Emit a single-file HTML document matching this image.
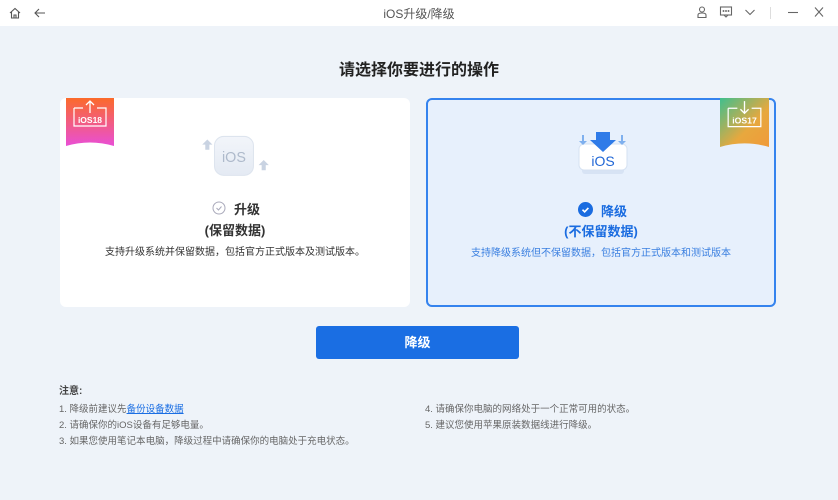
<!DOCTYPE html>
<html><head><meta charset="utf-8"><style>
*{margin:0;padding:0;box-sizing:border-box}
body{width:838px;height:500px;background:#eef3f9;font-family:"Liberation Sans","Noto Sans CJK SC",sans-serif;position:relative;overflow:hidden;color:#333}
.tb{position:absolute;left:0;top:0;width:838px;height:26px;background:#fff}
.tb .t{position:absolute;left:0;width:838px;top:5px;text-align:center;font-size:12px;color:#555}
.abs{position:absolute}
.card{position:absolute;top:98px;width:350px;height:209px;border-radius:6px;background:#fff}
.h{position:absolute;left:0;width:100%;text-align:center}
.note{position:absolute;font-size:9.5px;color:#666;line-height:16px}
</style></head><body>
<div class="tb">
<svg class="abs" style="left:8px;top:6px" width="14" height="14" viewBox="0 0 14 14" fill="none" stroke="#555" stroke-width="1.1"><path d="M2 7L7 2.5 12 7M3.5 6v6h7V6M6 12V9h2v3"/></svg>
<svg class="abs" style="left:33px;top:6px" width="14" height="14" viewBox="0 0 14 14" fill="none" stroke="#555" stroke-width="1.1"><path d="M12 7H2M6 3L2 7l4 4"/></svg>
<div class="t">iOS升级/降级</div>
<svg class="abs" style="left:695px;top:5px" width="14" height="14" viewBox="0 0 14 14" fill="none" stroke="#666" stroke-width="1.1"><circle cx="7" cy="4.5" r="2.5"/><path d="M3 12.5V10q0-2 4-2t4 2v2.5z"/></svg>
<svg class="abs" style="left:719px;top:5px" width="14" height="14" viewBox="0 0 14 14" fill="none" stroke="#666" stroke-width="1.1"><rect x="1.5" y="2" width="11" height="8"/><path d="M5 10l2 2 2-2"/><circle cx="4.5" cy="6" r=".4"/><circle cx="7" cy="6" r=".4"/><circle cx="9.5" cy="6" r=".4"/></svg>
<svg class="abs" style="left:743px;top:5px" width="14" height="14" viewBox="0 0 14 14" fill="none" stroke="#666" stroke-width="1.1"><path d="M2.5 5l4.5 4.5L11.5 5"/></svg>
<div class="abs" style="left:770px;top:7px;width:1px;height:12px;background:#ddd"></div>
<svg class="abs" style="left:786px;top:5px" width="14" height="14" viewBox="0 0 14 14" stroke="#666" stroke-width="1.1"><path d="M2 7.5h10"/></svg>
<svg class="abs" style="left:812px;top:5px" width="14" height="14" viewBox="0 0 14 14" stroke="#666" stroke-width="1.1"><path d="M3 2.5l8 9M11 2.5l-8 9"/></svg>
</div>
<div class="h" style="top:56px;font-size:16px;font-weight:bold;color:#222">请选择你要进行的操作</div>

<div class="card" style="left:60px">
<svg class="abs" style="left:134px;top:30px" width="82" height="64" viewBox="0 0 80 62"><defs><linearGradient id="g1" x1="0" y1="0" x2="0" y2="1"><stop offset="0" stop-color="#f2f5fa"/><stop offset="1" stop-color="#e4eaf3"/></linearGradient></defs>
<path d="M8 16l5-5 5 5h-3v5h-4v-5z" fill="#c9d3e2"/><path d="M63 36l5-5 5 5h-3v5h-4v-5z" fill="#c9d3e2"/>
<rect x="20" y="8" width="38" height="38" rx="9" fill="url(#g1)" stroke="#dde4ee"/>
<text x="39" y="33" text-anchor="middle" font-size="14" fill="#aebacb" font-family="Liberation Sans">iOS</text></svg>
<svg class="abs" style="left:152px;top:103px" width="14" height="14" viewBox="0 0 14 14" fill="none" stroke="#aab" stroke-width="1"><circle cx="7" cy="7" r="6"/><path d="M4.5 7l2 2 3-3.5"/></svg>
<div class="abs" style="left:174px;top:101px;font-size:13px;font-weight:bold;color:#333">升级</div>
<div class="h" style="top:122px;font-size:13px;font-weight:bold;color:#333">(保留数据)</div>
<div class="h" style="top:145px;font-size:10px;color:#333">支持升级系统并保留数据，包括官方正式版本及测试版本。</div>
</div>
<svg class="abs" style="left:66px;top:98px" width="48" height="48" viewBox="0 0 48 48"><defs><linearGradient id="g2" x1="0" y1="0" x2="0" y2="1"><stop offset="0" stop-color="#fb6a2a"/><stop offset="1" stop-color="#e94fd6"/></linearGradient></defs>
<path d="M0 0h48v48q-24-7-48 0z" fill="url(#g2)"/><path d="M8 10h9M31 10h9v18H8V10" fill="none" stroke="#fff" stroke-width="1.2"/><path d="M24 15V3M20 7l4-4 4 4" fill="none" stroke="#fff" stroke-width="1.3"/>
<text x="24" y="25" text-anchor="middle" font-size="8.5" font-weight="bold" fill="#fff" font-family="Liberation Sans">iOS18</text></svg>

<div class="card" style="left:426px;background:#e7f0fc;border:2px solid #3583ee">
<svg class="abs" style="left:140px;top:30px" width="70" height="60" viewBox="0 0 70 60">
<rect x="14" y="34" width="42" height="10" rx="3" fill="#d7e3f4"/>
<rect x="11" y="14" width="48" height="26" rx="5" fill="#fff" stroke="#d6e2f2"/>
<path d="M28 2h14v8h6L35 22 22 10h6z" fill="#2f7be8"/>
<path d="M14 5v6h-3l4 4 4-4h-3V5z" fill="#7fb0ee"/><path d="M53 5v6h-3l4 4 4-4h-3V5z" fill="#7fb0ee"/>
<text x="35" y="36" text-anchor="middle" font-size="14" fill="#1f66d6" font-family="Liberation Sans">iOS</text></svg>
<svg class="abs" style="left:150px;top:102px" width="15" height="15" viewBox="0 0 14 14"><circle cx="7" cy="7" r="7" fill="#1a6ce0"/><path d="M4.2 7.2l2 2 3.5-3.7" fill="none" stroke="#fff" stroke-width="1.5"/></svg>
<div class="abs" style="left:173px;top:101px;font-size:13px;font-weight:bold;color:#1a6ce0">降级</div>
<div class="h" style="top:121px;font-size:13px;font-weight:bold;color:#1a6ce0">(不保留数据)</div>
<div class="h" style="top:144px;font-size:10px;color:#3a7fe0">支持降级系统但不保留数据，包括官方正式版本和测试版本</div>
</div>
<svg class="abs" style="left:720px;top:98px" width="49" height="49" viewBox="0 0 48 48"><defs><linearGradient id="g3" x1="0" y1="0" x2="1" y2="1"><stop offset="0" stop-color="#3fbf8e"/><stop offset=".6" stop-color="#e7a83e"/><stop offset="1" stop-color="#f09a3a"/></linearGradient></defs>
<path d="M0 0h48v48q-24-7-48 0z" fill="url(#g3)"/><path d="M8 10h9M31 10h9v18H8V10" fill="none" stroke="#fff" stroke-width="1.2"/><path d="M24 3v12M20 11l4 4 4-4" fill="none" stroke="#fff" stroke-width="1.3"/>
<text x="24" y="25" text-anchor="middle" font-size="8.5" font-weight="bold" fill="#fff" font-family="Liberation Sans">iOS17</text></svg>

<div class="abs" style="left:316px;top:326px;width:203px;height:33px;background:#1a6ee3;border-radius:3px;color:#fff;font-size:13px;font-weight:bold;text-align:center;line-height:33px">降级</div>

<div class="note" style="left:59px;top:384px;font-size:10px;color:#444;font-weight:bold">注意:</div>
<div class="note" style="left:59px;top:402px">1. 降级前建议先<span style="color:#1a6ee3;text-decoration:underline">备份设备数据</span><br>2. 请确保你的iOS设备有足够电量。<br>3. 如果您使用笔记本电脑，降级过程中请确保你的电脑处于充电状态。</div>
<div class="note" style="left:425px;top:402px">4. 请确保你电脑的网络处于一个正常可用的状态。<br>5. 建议您使用苹果原装数据线进行降级。</div>
</body></html>
